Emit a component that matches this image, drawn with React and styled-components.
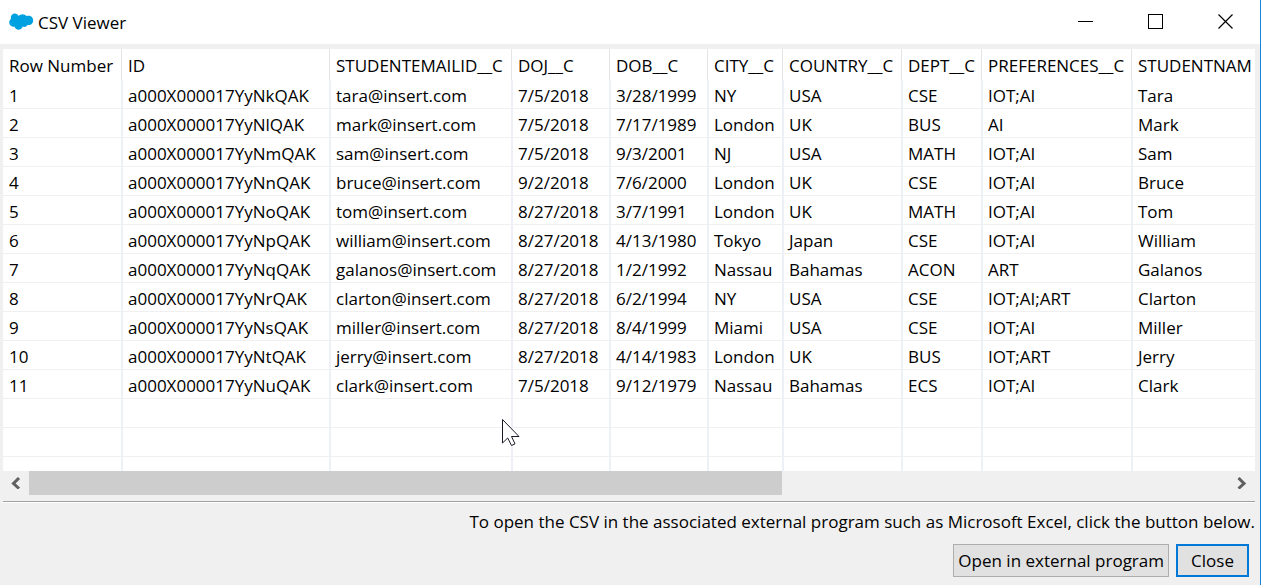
import React from "react";
import styled, { createGlobalStyle } from "styled-components";

const GlobalStyle = createGlobalStyle`
  *, *::before, *::after { box-sizing: border-box; }
  body {
    margin: 0;
    background: #f0f0f0;
    color: #000;
    font-family: "Open Sans", "Noto Sans", sans-serif;
    font-size: 17px;
    line-height: 24px;
  }
`;

const Window = styled.div`
  position: relative;
  display: flex;
  flex-direction: column;
  min-height: 100vh;
  background: #f0f0f0;
  border-right: 1px solid #1883d7;
`;

const TitleBar = styled.header`
  display: flex;
  align-items: center;
  height: 44px;
  padding-left: 8px;
  background: #fff;
`;

const Title = styled.h1`
  flex: 1;
  margin: 0 0 0 4px;
  padding-top: 2px;
  font-size: 17px;
  font-weight: 400;
`;

const CaptionButton = styled.button`
  display: flex;
  align-items: center;
  justify-content: center;
  width: 70px;
  height: 44px;
  padding: 0;
  border: 0;
  background: transparent;
`;

const GridPanel = styled.main`
  display: flex;
  flex-direction: column;
  flex: 1;
  margin: 5px 5px 0 3px;
`;

const Viewport = styled.div`
  display: grid;
  flex: 1;
  overflow: hidden;
  background: #fff;
`;

const Table = styled.table`
  width: 100%;
  table-layout: fixed;
  border-collapse: separate;
  border-spacing: 0;
`;

const HeadCell = styled.th`
  height: 31px;
  padding: 2px 0 0 5px;
  overflow: hidden;
  font-weight: 400;
  text-align: left;
  white-space: nowrap;
  background: linear-gradient(#e5e5e5, #e5e5e5) right 1px top / 1px 100% no-repeat;

  &:first-child { padding-left: 6px; }
  &:last-child { background: none; }
`;

const Cell = styled.td`
  height: ${(p) => (p.$filler ? "auto" : "29px")};
  padding: ${(p) => (p.$filler ? "0" : "4px 0 0 5px")};
  overflow: hidden;
  white-space: nowrap;
  border-right: 2px solid #edf1f7;
  border-bottom: ${(p) => (p.$filler ? "0" : "1px solid #f0f0f0")};

  &:first-child { padding-left: 6px; }
  &:last-child { border-right: 0; }
`;

const ScrollBar = styled.div`
  display: flex;
  height: 24px;
`;

const ScrollButton = styled.button`
  display: flex;
  align-items: center;
  justify-content: center;
  width: 26px;
  padding: 0;
  border: 0;
  background: transparent;
`;

const ScrollTrack = styled.div`
  flex: 1;
`;

const ScrollThumb = styled.div`
  width: 62.75%;
  height: 100%;
  background: #cdcdcd;
`;

const Footer = styled.footer`
  margin: 6px 5px 0 3px;
  padding-bottom: 8px;
  border-top: 1px solid #a0a0a0;
  box-shadow: inset 0 1px 0 #fff;
`;

const Note = styled.p`
  margin: 0;
  padding-top: 8px;
  font-size: 17px;
  text-align: right;
`;

const Actions = styled.div`
  display: flex;
  justify-content: flex-end;
  gap: 7px;
  margin-top: 10px;
  padding-right: 6px;
`;

const ActionButton = styled.button`
  min-width: 73px;
  height: 33px;
  padding: 1px 4px 0;
  border: ${(p) => (p.$primary ? "2px solid #0078d7" : "1px solid #adadad")};
  background: #e1e1e1;
  color: #000;
  font: inherit;
`;

const Pointer = styled.svg`
  position: absolute;
  left: 501px;
  top: 418px;
`;

const columns = [
  ["Row Number", 120],
  ["ID", 208],
  ["STUDENTEMAILID__C", 182],
  ["DOJ__C", 98],
  ["DOB__C", 98],
  ["CITY__C", 75],
  ["COUNTRY__C", 119],
  ["DEPT__C", 80],
  ["PREFERENCES__C", 150],
  ["STUDENTNAM", null],
];

const rows = [
  ["1", "a000X000017YyNkQAK", "tara@insert.com", "7/5/2018", "3/28/1999", "NY", "USA", "CSE", "IOT;AI", "Tara"],
  ["2", "a000X000017YyNlQAK", "mark@insert.com", "7/5/2018", "7/17/1989", "London", "UK", "BUS", "AI", "Mark"],
  ["3", "a000X000017YyNmQAK", "sam@insert.com", "7/5/2018", "9/3/2001", "NJ", "USA", "MATH", "IOT;AI", "Sam"],
  ["4", "a000X000017YyNnQAK", "bruce@insert.com", "9/2/2018", "7/6/2000", "London", "UK", "CSE", "IOT;AI", "Bruce"],
  ["5", "a000X000017YyNoQAK", "tom@insert.com", "8/27/2018", "3/7/1991", "London", "UK", "MATH", "IOT;AI", "Tom"],
  ["6", "a000X000017YyNpQAK", "william@insert.com", "8/27/2018", "4/13/1980", "Tokyo", "Japan", "CSE", "IOT;AI", "William"],
  ["7", "a000X000017YyNqQAK", "galanos@insert.com", "8/27/2018", "1/2/1992", "Nassau", "Bahamas", "ACON", "ART", "Galanos"],
  ["8", "a000X000017YyNrQAK", "clarton@insert.com", "8/27/2018", "6/2/1994", "NY", "USA", "CSE", "IOT;AI;ART", "Clarton"],
  ["9", "a000X000017YyNsQAK", "miller@insert.com", "8/27/2018", "8/4/1999", "Miami", "USA", "CSE", "IOT;AI", "Miller"],
  ["10", "a000X000017YyNtQAK", "jerry@insert.com", "8/27/2018", "4/14/1983", "London", "UK", "BUS", "IOT;ART", "Jerry"],
  ["11", "a000X000017YyNuQAK", "clark@insert.com", "7/5/2018", "9/12/1979", "Nassau", "Bahamas", "ECS", "IOT;AI", "Clark"],
];

const blankRows = ["blank-1", "blank-2"];

const CloudLogo = () => (
  <svg width="26" height="20" viewBox="0 0 26 20" aria-hidden="true">
    <path
      fill="#00a1e0"
      d="M10.700 4C11.700 2.900 13 2.200 14.500 2.200c1.700 0 3 .7 3.800 1.900.8-.3 1.400-.4 2.200-.4 2.600 0 4.700 2.100 4.700 4.700s-2.100 4.700-4.700 4.700c-.4 0-.7 0-1-.1-.7 1.200-1.800 1.900-3.200 1.900-.6 0-1.100-.1-1.600-.4-.7 1.800-2 3.200-4 3.200-1.900 0-3.500-1.200-4.100-3-.3.100-.6.100-.9.100-2.500 0-4.500-1.900-4.500-4.300 0-1.500.7-2.700 1.900-3.400-.2-.6-.3-1.100-.3-1.700 0-2.300 1.800-4 4.100-4 1.600 0 3 .9 3.800 2.600z"
    />
  </svg>
);

export default function App() {
  return (
    <Window>
      <GlobalStyle />
      <TitleBar>
        <CloudLogo />
        <Title>CSV Viewer</Title>
        <CaptionButton type="button" aria-label="Minimize">
          <svg width="15" height="16" shapeRendering="crispEdges">
            <path d="M0 7.500h15" stroke="#000" />
          </svg>
        </CaptionButton>
        <CaptionButton type="button" aria-label="Maximize">
          <svg width="15" height="16" shapeRendering="crispEdges">
            <rect x="0.5" y="0.5" width="14" height="14" fill="none" stroke="#000" />
          </svg>
        </CaptionButton>
        <CaptionButton type="button" aria-label="Close window">
          <svg width="15" height="16">
            <path d="M.5.5l14 14M14.500 .5l-14 14" fill="none" stroke="#000" strokeWidth="1.200" />
          </svg>
        </CaptionButton>
      </TitleBar>

      <GridPanel>
        <Viewport>
          <Table>
            <colgroup>
              {columns.map(([name, width]) => (
                <col key={name} width={width ?? undefined} />
              ))}
            </colgroup>
            <thead>
              <tr>
                {columns.map(([name]) => (
                  <HeadCell key={name} scope="col">{name}</HeadCell>
                ))}
              </tr>
            </thead>
            <tbody>
              {rows.map((row) => (
                <tr key={row[0]}>
                  {row.map((value, i) => (
                    <Cell key={columns[i][0]}>{value}</Cell>
                  ))}
                </tr>
              ))}
              {blankRows.map((id) => (
                <tr key={id}>
                  {columns.map(([name]) => (
                    <Cell key={name} />
                  ))}
                </tr>
              ))}
              <tr>
                {columns.map(([name]) => (
                  <Cell key={name} $filler />
                ))}
              </tr>
            </tbody>
          </Table>
        </Viewport>
        <ScrollBar>
          <ScrollButton type="button" aria-label="Scroll left">
            <svg width="10" height="12" viewBox="0 0 10 12">
              <path d="M8 1L2.500 6.500l5.500 5" fill="none" stroke="#606060" strokeWidth="3" />
            </svg>
          </ScrollButton>
          <ScrollTrack>
            <ScrollThumb />
          </ScrollTrack>
          <ScrollButton type="button" aria-label="Scroll right">
            <svg width="10" height="12" viewBox="0 0 10 12">
              <path d="M1.500 1L7 6.500l-5.500 5" fill="none" stroke="#606060" strokeWidth="3" />
            </svg>
          </ScrollButton>
        </ScrollBar>
      </GridPanel>

      <Footer>
        <Note>
          To open the CSV in the associated external program such as Microsoft Excel, click the button below.
        </Note>
        <Actions>
          <ActionButton type="button">Open in external program</ActionButton>
          <ActionButton type="button" $primary>Close</ActionButton>
        </Actions>
      </Footer>

      <Pointer width="20" height="30" viewBox="0 0 20 30" aria-hidden="true">
        <path
          d="M1.500 1.500v23.500l5.200-5 3.800 7.500 3.500-1.600-3.500-7.400h7.500z"
          fill="#fff"
          stroke="#1a1a26"
        />
      </Pointer>
    </Window>
  );
}
